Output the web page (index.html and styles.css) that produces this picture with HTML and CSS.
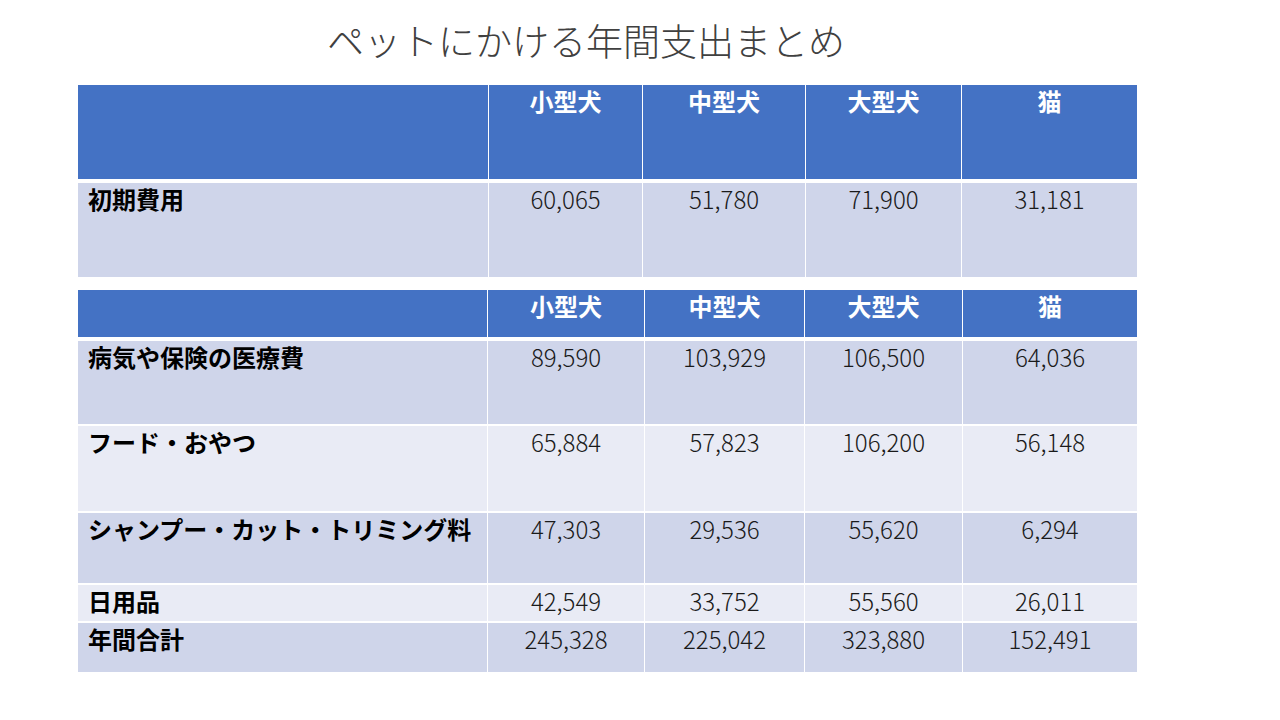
FILE: index.html
```html
<!DOCTYPE html>
<html lang="ja">
<head>
<meta charset="utf-8">
<title>ペットにかける年間支出まとめ</title>
<link rel="stylesheet" href="styles.css">
</head>
<body>
<div class="slide">
  <h1 class="title">ペットにかける年間支出まとめ</h1>

  <div class="grid grid-a">
    <div class="cell head label"></div>
    <div class="cell head">小型犬</div>
    <div class="cell head">中型犬</div>
    <div class="cell head">大型犬</div>
    <div class="cell head">猫</div>

    <div class="cell odd label last">初期費用</div>
    <div class="cell odd num last">60,065</div>
    <div class="cell odd num last">51,780</div>
    <div class="cell odd num last">71,900</div>
    <div class="cell odd num last">31,181</div>
  </div>

  <div class="grid grid-b">
    <div class="cell head label"></div>
    <div class="cell head">小型犬</div>
    <div class="cell head">中型犬</div>
    <div class="cell head">大型犬</div>
    <div class="cell head">猫</div>

    <div class="cell odd label">病気や保険の医療費</div>
    <div class="cell odd num">89,590</div>
    <div class="cell odd num">103,929</div>
    <div class="cell odd num">106,500</div>
    <div class="cell odd num">64,036</div>

    <div class="cell even label">フード・おやつ</div>
    <div class="cell even num">65,884</div>
    <div class="cell even num">57,823</div>
    <div class="cell even num">106,200</div>
    <div class="cell even num">56,148</div>

    <div class="cell odd label">シャンプー・カット・トリミング料</div>
    <div class="cell odd num">47,303</div>
    <div class="cell odd num">29,536</div>
    <div class="cell odd num">55,620</div>
    <div class="cell odd num">6,294</div>

    <div class="cell even label">日用品</div>
    <div class="cell even num">42,549</div>
    <div class="cell even num">33,752</div>
    <div class="cell even num">55,560</div>
    <div class="cell even num">26,011</div>

    <div class="cell odd label last">年間合計</div>
    <div class="cell odd num last">245,328</div>
    <div class="cell odd num last">225,042</div>
    <div class="cell odd num last">323,880</div>
    <div class="cell odd num last">152,491</div>
  </div>
</div>
</body>
</html>
```

FILE: styles.css
```css
html, body {
  margin: 0;
  padding: 0;
  background: #ffffff;
}

.slide {
  width: 1280px;
  height: 720px;
  padding-top: 16px;
  box-sizing: border-box;
  font-family: "Noto Sans CJK JP", "Noto Sans", sans-serif;
  color: #000000;
}

.title {
  margin: 0 0 21px 0;
  padding-left: 327px;
  font-size: 37px;
  line-height: 48px;
  font-weight: 300;
  color: #404040;
  letter-spacing: 0;
}

.grid {
  display: grid;
  margin-left: 78px;
  width: 1059px;
}

.grid-a {
  grid-template-columns: 410px 154px 163px 156px 176px;
  grid-template-rows: 98px 94px;
  margin-bottom: 13px;
}

.grid-b {
  grid-template-columns: 409px 157px 160px 158px 175px;
  grid-template-rows: 51px 85px 87px 72px 38px 49px;
}

.cell {
  box-sizing: border-box;
  border-left: 1px solid #ffffff;
  border-bottom: 2px solid #ffffff;
  padding-top: 2px;
  font-size: 24px;
  line-height: 28px;
  text-align: center;
  white-space: nowrap;
}

.cell.label {
  border-left: none;
  text-align: left;
  padding-left: 10px;
  font-weight: 700;
}

.cell.head {
  background: #4472c4;
  color: #ffffff;
  font-weight: 700;
  border-bottom-width: 4px;
}

.cell.odd {
  background: #cfd5ea;
}

.cell.even {
  background: #e9ebf5;
}

.cell.num {
  font-weight: 300;
  color: #1a1a1a;
}

.cell.last {
  border-bottom: none;
}
```
